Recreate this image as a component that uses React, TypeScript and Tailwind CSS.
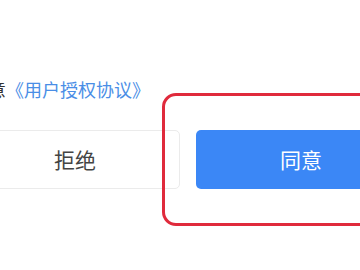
import React from "react";

export default function App() {
  return (
    <div
      className="relative w-[360px] h-[270px] overflow-hidden bg-white"
      style={{ fontFamily: '"Noto Sans CJK SC", "Noto Sans", sans-serif' }}
    >
      <div className="pt-[77px] ml-[-120px] whitespace-nowrap text-[18px] leading-[24px] text-[#333333]">
        我已阅读并同意<span className="text-[#4a8ee6]">《用户授权协议》</span>
      </div>
      <div className="mt-[29px] ml-[-30px] flex gap-[16px]">
        <button className="w-[210px] h-[59px] shrink-0 rounded-[5px] border border-[#ebebeb] bg-white text-[21px] text-[#444444] flex items-center justify-center">
          拒绝
        </button>
        <button className="w-[210px] h-[59px] shrink-0 rounded-[5px] bg-[#3b87f6] text-[21px] text-white flex items-center justify-center">
          同意
        </button>
      </div>
      <div className="absolute left-[162px] top-[93px] w-[260px] h-[133px] rounded-[14px] border-[3.5px] border-[#e02a3c]" />
    </div>
  );
}
